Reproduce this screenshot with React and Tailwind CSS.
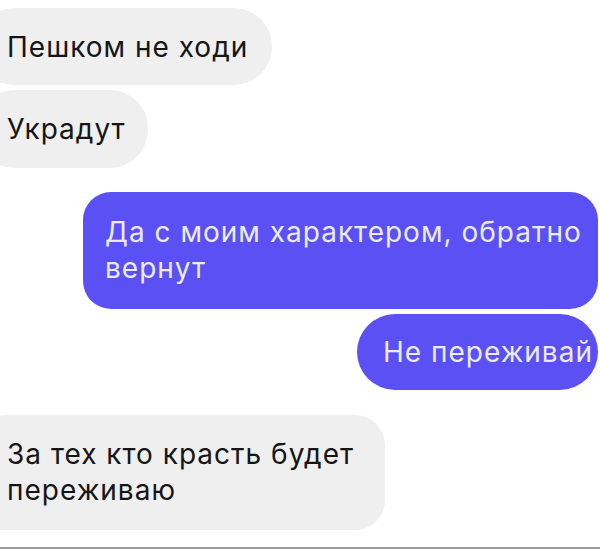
import React from "react";

const Incoming = ({ children, className = "" }) => (
  <div className={`self-start -ml-[24px] bg-[#efeff0] text-[#151515] pl-[31px] ${className}`}>{children}</div>
);

const Outgoing = ({ children, className = "" }) => (
  <div className={`self-end mr-[2px] bg-[#5a50f4] text-[#ecebfb] ${className}`}>{children}</div>
);

export default function App() {
  return (
    <div
      className="w-[600px] h-[549px] overflow-hidden bg-white flex flex-col text-[28px] leading-[36px] tracking-[1px]"
      style={{ fontFamily: 'Inter, "Liberation Sans", Arial, sans-serif' }}
    >
      <div className="flex flex-col pt-[8px]">
        <Incoming className="h-[77px] w-[296px] rounded-[38px] flex items-center">Пешком не ходи</Incoming>
        <Incoming className="mt-[5px] h-[78px] w-[172px] rounded-[38px] flex items-center">Украдут</Incoming>
        <Outgoing className="mt-[24px] h-[117px] w-[515px] rounded-[28px] pl-[22px] pt-[22px] whitespace-nowrap">
          Да с моим характером, обратно
          <br />
          вернут
        </Outgoing>
        <Outgoing className="mt-[5px] h-[76px] w-[241px] rounded-[38px] pl-[26px] flex items-center whitespace-nowrap">
          Не переживай
        </Outgoing>
        <Incoming className="mt-[25px] h-[115px] w-[409px] rounded-[30px] pt-[21px] pr-[20px]">
          За тех кто красть будет переживаю
        </Incoming>
      </div>
      <div className="mt-auto h-[2px] bg-[#9a9a9a]" />
    </div>
  );
}
